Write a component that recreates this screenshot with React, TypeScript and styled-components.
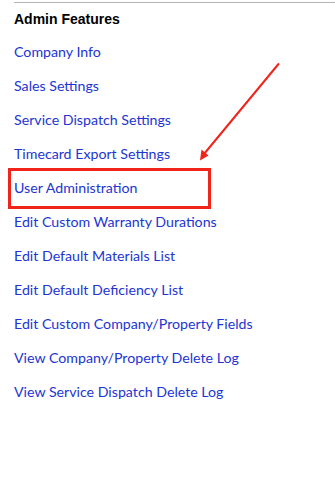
import React from "react";
import styled, { createGlobalStyle } from "styled-components";

const Global = createGlobalStyle`
  html, body { margin: 0; padding: 0; background: #ffffff; }
  body { width: 335px; height: 478px; overflow: hidden; }
`;

const Page = styled.div`
  position: relative;
  width: 335px;
  height: 478px;
  padding-left: 14px;
  box-sizing: border-box;
`;

const Rule = styled.div`
  margin-top: 2px;
  height: 0;
  border-top: 1px solid #b4b4b4;
`;

const Heading = styled.h3`
  margin: 6px 0 0 0;
  font-family: "Liberation Sans", Arial, sans-serif;
  font-weight: bold;
  font-size: 14px;
  line-height: 20px;
  color: #000000;
`;

const LinkList = styled.ul`
  list-style: none;
  margin: 6px 0 0 0;
  padding: 0;
  display: flex;
  flex-direction: column;
`;

const Item = styled.li<{ $highlight?: boolean }>`
  position: relative;
  height: 34px;
  line-height: 34px;
  ${(p) =>
    p.$highlight &&
    `
    &::after {
      content: "";
      position: absolute;
      left: -6px;
      top: -3px;
      width: 203px;
      height: 41px;
      box-sizing: border-box;
      border: 3px solid #f1241c;
    }
  `}
`;

const Link = styled.a`
  font-family: Lato, "Open Sans", sans-serif;
  font-size: 14.2px;
  color: #2235d2;
  text-decoration: none;
  white-space: nowrap;
`;

const Arrow = styled.svg`
  position: absolute;
  left: 0;
  top: 0;
  pointer-events: none;
`;

const links = [
  "Company Info",
  "Sales Settings",
  "Service Dispatch Settings",
  "Timecard Export Settings",
  "User Administration",
  "Edit Custom Warranty Durations",
  "Edit Default Materials List",
  "Edit Default Deficiency List",
  "Edit Custom Company/Property Fields",
  "View Company/Property Delete Log",
  "View Service Dispatch Delete Log",
];

export default function App() {
  return (
    <>
      <Global />
      <Page>
        <Rule />
        <Heading>Admin Features</Heading>
        <LinkList>
          {links.map((l) => (
            <Item key={l} $highlight={l === "User Administration"}>
              <Link href="#">{l}</Link>
            </Item>
          ))}
        </LinkList>
        <Arrow width="335" height="478" viewBox="0 0 335 478">
          <line x1="278.5" y1="62" x2="204" y2="152" stroke="#f1241c" strokeWidth="2" strokeLinecap="round" />
          <polygon points="200,158.5 201.5,147.5 208.5,153.5" fill="#f1241c" />
        </Arrow>
      </Page>
    </>
  );
}
